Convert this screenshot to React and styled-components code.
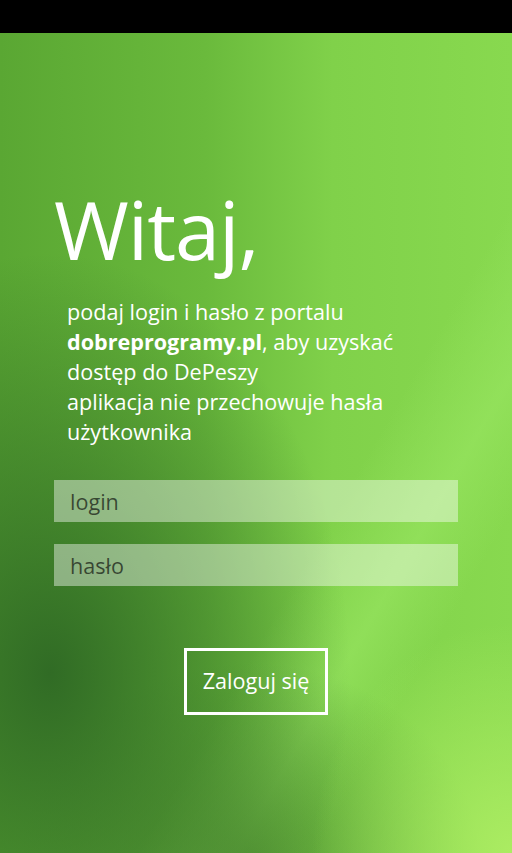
import React from 'react'
import styled, { createGlobalStyle } from 'styled-components'

const Global = createGlobalStyle`
html, body {
  margin: 0;
  padding: 0;
  background: #000;
}
* { box-sizing: border-box; }
`

const Screen = styled.div`
width: 512px;
height: 853px;
display: flex;
flex-direction: column;
font-family: "Open Sans", "Noto Sans", sans-serif;
color: #fff;
overflow: hidden;
`

const StatusBar = styled.div`
height: 33px;
background: #000;
flex-shrink: 0;
`

const Page = styled.div`
flex: 1;
display: flex;
flex-direction: column;
padding: 146px 54px 0 54px;
background:
  radial-gradient(ellipse 200px 230px at 512px 820px, rgba(175,238,100,0.9), rgba(175,238,100,0) 100%),
  radial-gradient(ellipse 300px 420px at 50px 640px, rgba(46,104,36,0.95), rgba(46,104,36,0) 100%),
  radial-gradient(ellipse 230px 200px at 250px 830px, rgba(80,145,50,0.85), rgba(80,145,50,0) 100%),
  linear-gradient(120deg, rgba(150,228,95,0) 62%, rgba(150,228,95,0.7) 72%, rgba(150,228,95,0) 80%),
  linear-gradient(90deg, #5aa733 0%, #6aba3c 40%, #80d14a 65%, #88d94f 100%);
`

const Title = styled.h1`
margin: 0;
font-weight: 400;
font-size: 81px;
line-height: 100px;
letter-spacing: -1px;
`

const Intro = styled.p`
margin: 18px 0 0 13px;
font-size: 21.6px;
line-height: 30px;
font-weight: 400;
`

const Strong = styled.b`
font-weight: 700;
`

const Form = styled.div`
display: flex;
flex-direction: column;
gap: 22px;
margin-top: 33px;
`

const Field = styled.input`
width: 404px;
height: 42px;
border: none;
outline: none;
padding: 0 16px;
font-family: inherit;
font-size: 21.6px;
color: #333;
background: rgba(255,255,255,0.42);
&::placeholder {
  color: rgba(30,40,28,0.78);
}
`

const ButtonRow = styled.div`
display: flex;
justify-content: center;
margin-top: 62px;
`

const Button = styled.button`
width: 144px;
height: 67px;
border: 3px solid #fff;
background: transparent;
color: #fff;
font-family: inherit;
font-size: 21.6px;
padding: 0 0 3px;
cursor: pointer;
`

export default function App() {
  return (
    <Screen>
      <Global />
      <StatusBar />
      <Page>
        <Title>Witaj,</Title>
        <Intro>
          podaj login i hasło z portalu<br />
          <Strong>dobreprogramy.pl</Strong>, aby uzyskać<br />
          dostęp do DePeszy<br />
          aplikacja nie przechowuje hasła<br />
          użytkownika
        </Intro>
        <Form>
          <Field placeholder="login" />
          <Field placeholder="hasło" type="password" />
        </Form>
        <ButtonRow>
          <Button>Zaloguj się</Button>
        </ButtonRow>
      </Page>
    </Screen>
  )
}
